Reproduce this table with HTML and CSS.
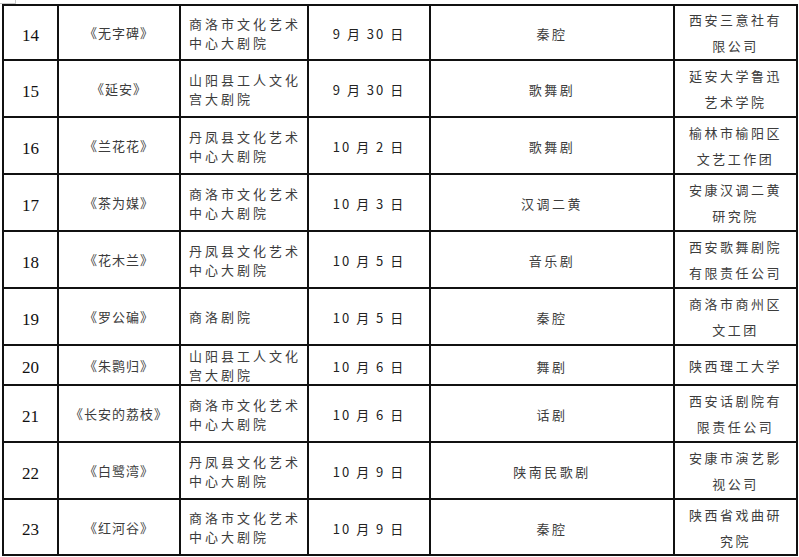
FILE: index.html
```html
<!DOCTYPE html>
<html lang="zh">
<head>
<meta charset="utf-8">
<title>演出表</title>
<link rel="stylesheet" href="styles.css">
</head>
<body>
<div class="corner"></div>
<table class="sched">
<colgroup>
<col class="c1"><col class="c2"><col class="c3"><col class="c4"><col class="c5"><col class="c6">
</colgroup>
<tbody>
<tr class="r56"><td class="no">14</td><td class="ti">《无字碑》</td><td class="ve">商洛市文化艺术<br>中心大剧院</td><td class="da">9 月 30 日</td><td class="ge">秦腔</td><td class="og">西安三意社有<br>限公司</td></tr>
<tr class="r57"><td class="no">15</td><td class="ti">《延安》</td><td class="ve">山阳县工人文化<br>宫大剧院</td><td class="da">9 月 30 日</td><td class="ge">歌舞剧</td><td class="og">延安大学鲁迅<br>艺术学院</td></tr>
<tr class="r57"><td class="no">16</td><td class="ti">《兰花花》</td><td class="ve">丹凤县文化艺术<br>中心大剧院</td><td class="da">10 月 2 日</td><td class="ge">歌舞剧</td><td class="og">榆林市榆阳区<br>文艺工作团</td></tr>
<tr class="r57"><td class="no">17</td><td class="ti">《茶为媒》</td><td class="ve">商洛市文化艺术<br>中心大剧院</td><td class="da">10 月 3 日</td><td class="ge">汉调二黄</td><td class="og">安康汉调二黄<br>研究院</td></tr>
<tr class="r57"><td class="no">18</td><td class="ti">《花木兰》</td><td class="ve">丹凤县文化艺术<br>中心大剧院</td><td class="da">10 月 5 日</td><td class="ge">音乐剧</td><td class="og">西安歌舞剧院<br>有限责任公司</td></tr>
<tr class="r57"><td class="no">19</td><td class="ti">《罗公碥》</td><td class="ve">商洛剧院</td><td class="da">10 月 5 日</td><td class="ge">秦腔</td><td class="og">商洛市商州区<br>文工团</td></tr>
<tr class="r40"><td class="no">20</td><td class="ti">《朱鹮归》</td><td class="ve">山阳县工人文化<br>宫大剧院</td><td class="da">10 月 6 日</td><td class="ge">舞剧</td><td class="og">陕西理工大学</td></tr>
<tr class="r57"><td class="no">21</td><td class="ti">《长安的荔枝》</td><td class="ve">商洛市文化艺术<br>中心大剧院</td><td class="da">10 月 6 日</td><td class="ge">话剧</td><td class="og">西安话剧院有<br>限责任公司</td></tr>
<tr class="r57"><td class="no">22</td><td class="ti">《白鹭湾》</td><td class="ve">丹凤县文化艺术<br>中心大剧院</td><td class="da">10 月 9 日</td><td class="ge">陕南民歌剧</td><td class="og">安康市演艺影<br>视公司</td></tr>
<tr class="r55"><td class="no">23</td><td class="ti">《红河谷》</td><td class="ve">商洛市文化艺术<br>中心大剧院</td><td class="da">10 月 9 日</td><td class="ge">秦腔</td><td class="og">陕西省戏曲研<br>究院</td></tr>
</tbody>
</table>
</body>
</html>
```
FILE: styles.css
```css
html, body {
  margin: 0;
  padding: 0;
  background: #ffffff;
}
body {
  position: relative;
  width: 799px;
  height: 557px;
  overflow: hidden;
  font-family: "Noto Sans CJK SC", "Noto Sans", sans-serif;
}
.corner {
  position: absolute;
  left: 0;
  top: 0;
  width: 15px;
  height: 3px;
  border-right: 1px solid #c8c8c8;
  border-bottom: 1px solid #c8c8c8;
}
.sched {
  border-collapse: collapse;
  table-layout: fixed;
  width: 794px;
  margin: 4px 0 0 2px;
}
.c1 { width: 55px; }
.c2 { width: 122px; }
.c3 { width: 128px; }
.c4 { width: 122px; }
.c5 { width: 244px; }
.c6 { width: 123px; }
.sched td {
  border: 2px solid #111111;
  padding: 0;
  vertical-align: middle;
  text-align: center;
  color: #3c3c3c;
  font-size: 13px;
  line-height: 19px;
  white-space: nowrap;
}
.r56 { height: 55px; }
.r57 { height: 57px; }
.r40 { height: 38px; }
.r55 { height: 56px; }
.sched td.no {
  font-family: "Liberation Serif", "Times New Roman", serif;
  font-size: 17px;
  color: #111111;
  padding-top: 5px;
}
.sched td.ti {
  letter-spacing: 1px;
}
.sched td.ve {
  text-align: left;
  padding-left: 8px;
  letter-spacing: 3px;
  line-height: 19px;
}
.sched td.da {
  letter-spacing: 2px;
  color: #222222;
  padding-top: 2px;
}
.sched td.ge {
  letter-spacing: 2.5px;
  padding-top: 2px;
}
.sched td.og {
  letter-spacing: 2.5px;
  line-height: 26px;
  padding-top: 1px;
}
```
